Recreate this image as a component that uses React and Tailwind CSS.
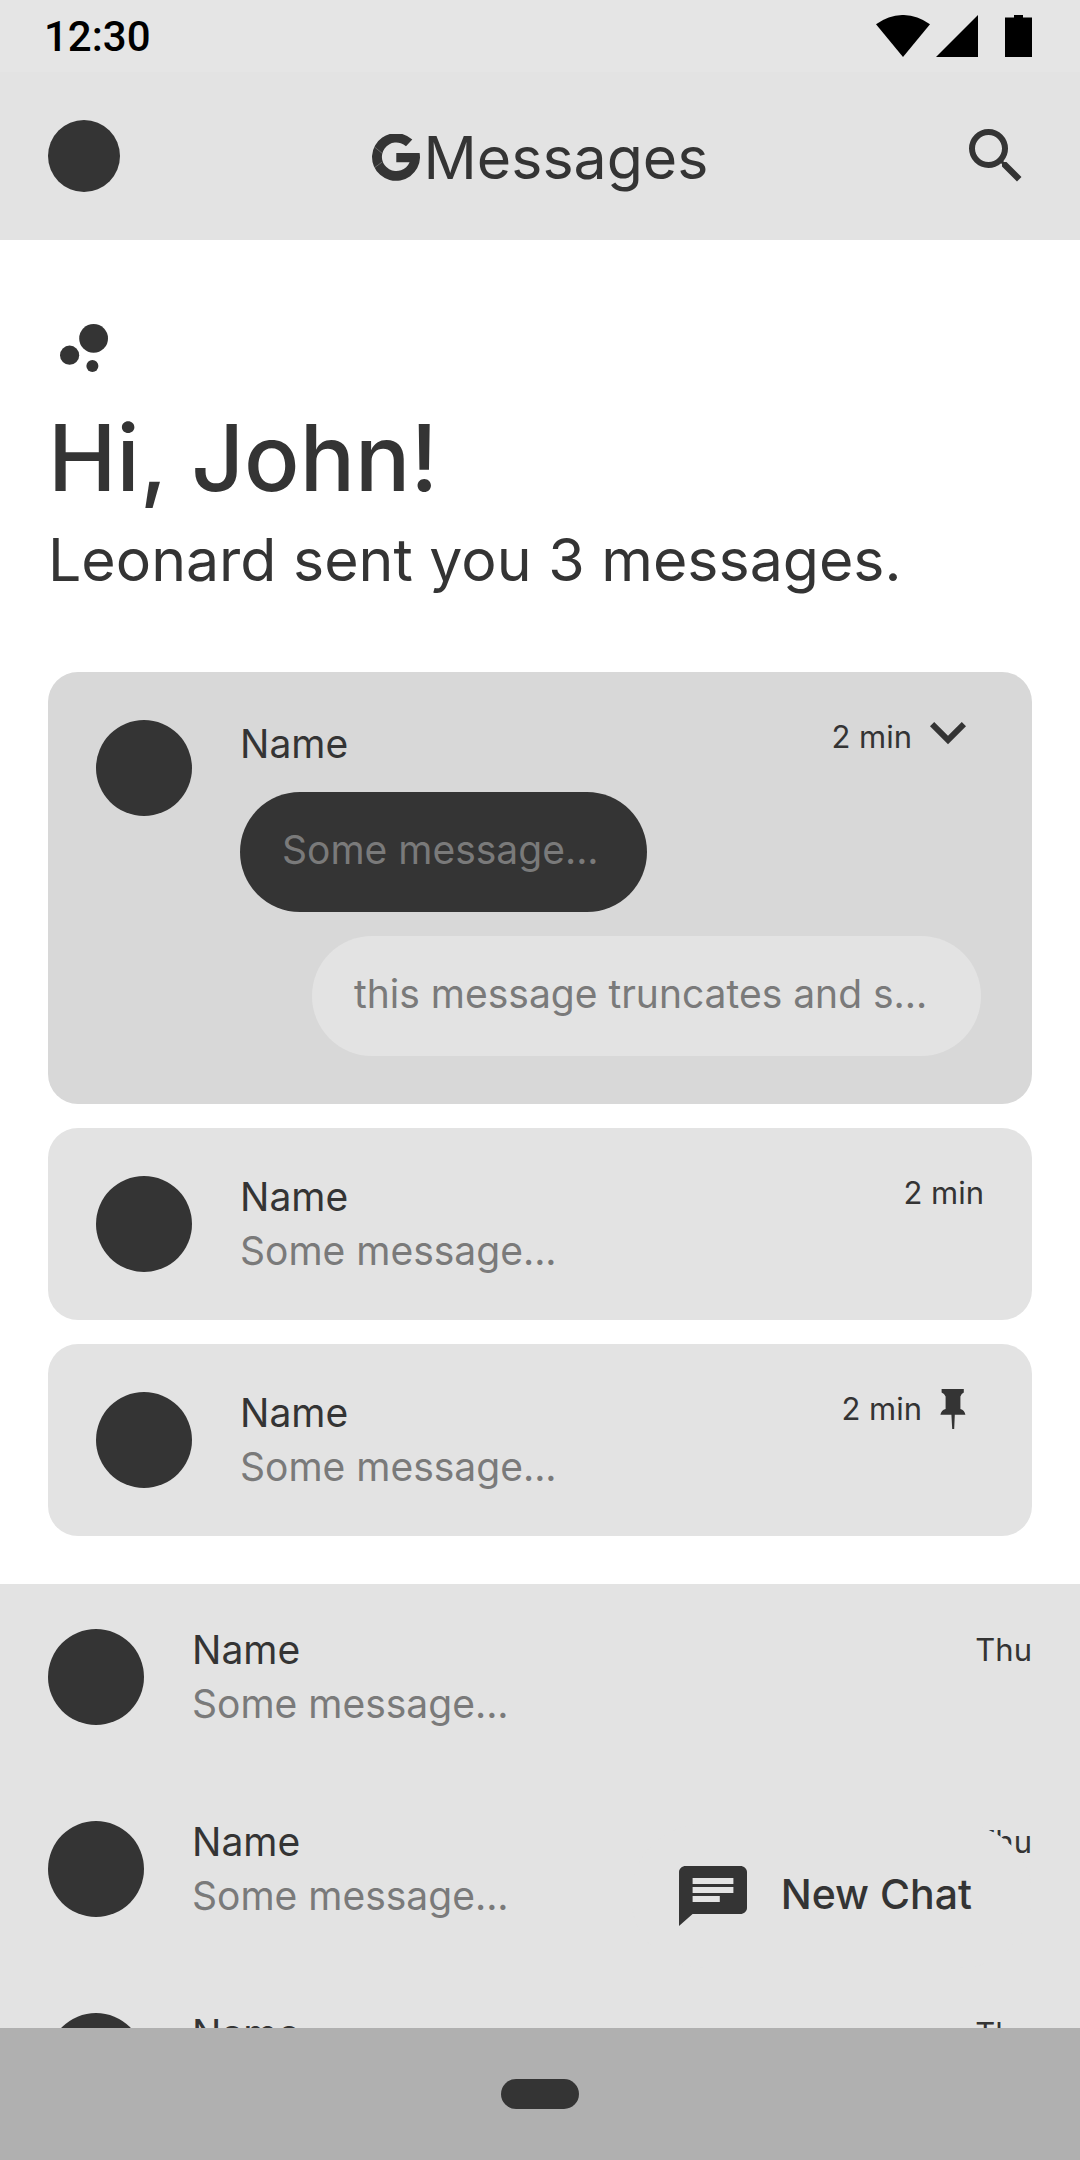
const chats = [
  { id: 1, name: 'Name', text: 'Some message...', time: 'Thu' },
  { id: 2, name: 'Name', text: 'Some message...', time: 'Thu' },
  { id: 3, name: 'Name', text: 'Some message...', time: 'Thu' },
]

function GLogo() {
  return (
    <svg viewBox="0 0 48 48" className="size-12 shrink-0" aria-label="G" role="img">
      <path
        fill="#343434"
        d="M40.3 5.5A24 23.8 0 1 0 48 23.8Q48 21 47.6 19H24.3V28.3H37.6A14.4 14.3 0 1 1 34 12.2Z"
      />
      <path d="M2.5 13L10.2 19.3M2.5 33.7L10.2 28" stroke="#e3e3e3" strokeOpacity=".5" strokeWidth=".6" />
    </svg>
  )
}

function SearchIcon() {
  return (
    <svg viewBox="0 0 24 24" className="size-18" fill="#343434" aria-hidden="true">
      <path d="M15.5 14h-.79l-.28-.27A6.471 6.471 0 0 0 16 9.5 6.5 6.5 0 1 0 9.5 16c1.61 0 3.09-.59 4.23-1.57l.27.28v.79l5 4.99L20.49 19l-4.99-5zm-6 0C7.01 14 5 11.99 5 9.5S7.01 5 9.5 5 14 7.01 14 9.5 11.99 14 9.5 14z" />
    </svg>
  )
}

function BubblesIcon() {
  return (
    <svg viewBox="0 0 24 24" className="size-18" fill="#343434" aria-hidden="true">
      <circle cx="7.2" cy="14.4" r="3.2" />
      <circle cx="14.8" cy="18" r="2" />
      <circle cx="15.2" cy="8.8" r="4.8" />
    </svg>
  )
}

function ChevronIcon() {
  return (
    <svg viewBox="0 0 36 30" className="h-[30px] w-9" fill="#343434" aria-hidden="true">
      <path d="M31.8 0L18 13.8L4.2 0L0 4.2L18 22.2L36 4.2Z" />
    </svg>
  )
}

function PinIcon() {
  return (
    <svg viewBox="0 0 26 40" className="h-10 w-[26px]" fill="#343434" aria-label="Pinned" role="img">
      <path d="M1.6 0H23.8V3.6Q21.4 4.6 20.4 7.4V20Q24.6 21 25.4 25.8H14.8L14.2 40H12.2L11.4 25.8H.4Q1.2 21 5.6 20V7.4Q4.4 4.6 1.6 3.6Z" />
    </svg>
  )
}

function ChatIcon() {
  return (
    <svg viewBox="2 2 20 20" preserveAspectRatio="none" className="h-15 w-[68px]" fill="#343434" aria-hidden="true">
      <path d="M20 2H4c-1.1 0-1.99.9-1.99 2L2 22l4-4h14c1.1 0 2-.9 2-2V4c0-1.1-.9-2-2-2zM6 6h12v2H6V6zm8 8H6v-2h8v2zm4-3H6V9h12v2z" />
    </svg>
  )
}

function StatusBar() {
  return (
    <div className="flex h-18 shrink-0 items-start justify-between bg-[#e5e5e5] pt-[15px] pr-12 pl-11 text-black">
      <span className="font-[Roboto,sans-serif] text-[42px] leading-[44px] font-medium">12:30</span>
      <div className="flex items-center">
        <svg viewBox="0 0 54 42" className="h-[42px] w-[54px]" aria-label="Wi-Fi" role="img">
          <path d="M0 9.3A43.8 43.8 0 0 1 54 9.3L27 42Z" />
        </svg>
        <svg viewBox="0 0 42 42" className="ml-1.5 size-[42px]" aria-label="Signal" role="img">
          <path d="M42 0V42H0Z" />
        </svg>
        <svg viewBox="0 0 27 42" className="ml-[27px] h-[42px] w-[27px]" aria-label="Battery" role="img">
          <path d="M9 0H18V2.6H27V42H0V2.6H9Z" />
        </svg>
      </div>
    </div>
  )
}

function Header() {
  return (
    <header className="flex h-42 shrink-0 items-center justify-between bg-[#e3e3e3] px-12">
      <button type="button" aria-label="Account" className="size-18 rounded-full bg-[#343434]" />
      <div className="flex items-center gap-1 pt-1">
        <GLogo />
        <h1 className="text-[59px] leading-[84px]">Messages</h1>
      </div>
      <button type="button" aria-label="Search">
        <SearchIcon />
      </button>
    </header>
  )
}

function Avatar() {
  return <div className="size-24 shrink-0 rounded-full bg-[#343434]" />
}

function NameAndText({ name, text }) {
  return (
    <div className="min-w-0 flex-1 text-[39px] leading-[54px]">
      <div>{name}</div>
      <div className="truncate text-[#7a7a7a]">{text}</div>
    </div>
  )
}

function Card({ time, pinned }) {
  return (
    <article className="flex items-center gap-12 rounded-[30px] bg-[#e3e3e3] px-12 py-[42px]">
      <Avatar />
      <NameAndText name="Name" text="Some message..." />
      <div className="flex items-center gap-[18px] self-start text-[31px] leading-[46px]">
        <span>{time}</span>
        {pinned && (
          <span className="mr-[18px]">
            <PinIcon />
          </span>
        )}
      </div>
    </article>
  )
}

function OpenCard() {
  return (
    <article className="flex gap-12 rounded-[30px] bg-[#d8d8d8] px-12 pt-[42px] pb-12">
      <div className="pt-1.5">
        <Avatar />
      </div>
      <div className="flex min-w-0 flex-1 flex-col items-start text-[39px] leading-[54px]">
        <div className="flex w-full items-start justify-between">
          <div className="leading-[60px]">Name</div>
          <button type="button" aria-label="Collapse, 2 min" className="mr-[18px] flex items-center gap-[18px] text-[31px] leading-[46px]">
            <span>2 min</span>
            <ChevronIcon />
          </button>
        </div>
        <div className="mt-[18px] rounded-full bg-[#343434] pt-[31px] pr-12 pb-[35px] pl-[42px] text-[#7a7a7a]">
          Some message...
        </div>
        <div className="mt-6 mr-[3px] ml-18 self-stretch rounded-full bg-[#e3e3e3] px-[42px] pt-[31px] pb-[35px] whitespace-nowrap text-[#7a7a7a]">
          this message truncates and s...
        </div>
      </div>
    </article>
  )
}

export default function App() {
  return (
    <div className="flex h-screen flex-col bg-white font-[Inter,sans-serif] text-[#343434]">
      <StatusBar />
      <Header />
      <div className="relative flex min-h-0 flex-1 flex-col">
        <main className="flex min-h-0 flex-1 flex-col overflow-hidden">
          <section className="shrink-0 px-12 pt-18 pb-12">
            <BubblesIcon />
            <h2 className="mt-5 text-[92px] leading-[108px] font-medium">Hi, John!</h2>
            <p className="mt-1.5 text-[59px] leading-[84px]">Leonard sent you 3 messages.</p>
            <div className="mt-[70px] flex flex-col gap-6">
              <OpenCard />
              <Card time="2 min" />
              <Card time="2 min" pinned />
            </div>
          </section>
          <ul className="flex shrink-0 flex-col gap-[84px] bg-[#e3e3e3] px-12 pt-[39px]">
            {chats.map((chat) => (
              <li key={chat.id} className="flex items-center gap-12">
                <Avatar />
                <NameAndText name={chat.name} text={chat.text} />
                <span className="self-start text-[31px] leading-[54px]">{chat.time}</span>
              </li>
            ))}
          </ul>
        </main>
        <button
          type="button"
          className="absolute right-12 bottom-15 flex h-36 items-center rounded-full bg-[#e3e3e3] pr-15 pl-12 text-[41px] leading-[60px] font-medium"
        >
          <ChatIcon />
          <span className="ml-[34px] pb-1">New Chat</span>
        </button>
      </div>
      <nav className="flex h-33 shrink-0 items-center justify-center bg-[#b0b0b0]">
        <button type="button" aria-label="Home" className="h-[30px] w-[78px] rounded-full bg-[#343434]" />
      </nav>
    </div>
  )
}
